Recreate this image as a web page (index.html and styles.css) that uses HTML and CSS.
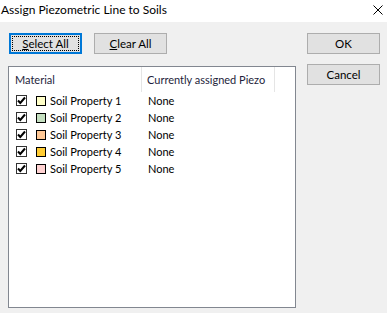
FILE: index.html
```html
<!DOCTYPE html>
<html lang="en">
<head>
	<meta charset="UTF-8">
	<title>Assign Piezometric Line to Soils</title>
	<link rel="stylesheet" href="styles.css">
</head>
<body>
	<div class="dialog">
		<div class="title-bar">
			<span class="title">Assign Piezometric Line to Soils</span>
			<svg class="close" width="10" height="10" viewBox="0 0 10 10">
				<path d="M0.5 0.5 L9.5 9.5 M9.5 0.5 L0.5 9.5" stroke="#000" stroke-width="1"/>
			</svg>
		</div>
		<div class="main">
			<div class="left">
				<div class="top-buttons">
					<button class="btn default"><span class="focus"><u>S</u>elect All</span></button>
					<button class="btn"><u>C</u>lear All</button>
				</div>
				<div class="list">
					<div class="list-head">
						<div class="col col-mat">Material</div>
						<div class="col col-piezo">Currently assigned Piezo</div>
					</div>
					<div class="list-body" id="rows"></div>
				</div>
			</div>
			<div class="right">
				<button class="btn">OK</button>
				<button class="btn">Cancel</button>
			</div>
		</div>
	</div>
	<script>
		var soils = [
			{name: 'Soil Property 1', color: '#ffffc8'},
			{name: 'Soil Property 2', color: '#c4dfc0'},
			{name: 'Soil Property 3', color: '#ffc896'},
			{name: 'Soil Property 4', color: '#ffcc33'},
			{name: 'Soil Property 5', color: '#ffd2d2'}
		];
		var rows = document.getElementById('rows');
		for(var i=0; i<soils.length; i++){
			var row = document.createElement('div');
			row.className = 'row';
			row.innerHTML =
				'<div class="col col-mat">' +
					'<span class="check"><svg width="9" height="9" viewBox="0 0 9 9"><path d="M1 4.5 L3.3 7 L8 1.5" fill="none" stroke="#000" stroke-width="2"/></svg></span>' +
					'<span class="swatch" style="background:' + soils[i].color + '"></span>' +
					'<span>' + soils[i].name + '</span>' +
				'</div>' +
				'<div class="col col-piezo">None</div>';
			rows.appendChild(row);
		}
	</script>
</body>
</html>
```
FILE: styles.css
```css
*{
	margin: 0;
	padding: 0;
	box-sizing: border-box;
}
body{
	width: 387px;
	height: 313px;
	background: #f0f0f0;
	font-family: Lato, "Noto Sans", sans-serif;
	font-size: 11px;
	color: #000;
	overflow: hidden;
}
.title-bar{
	height: 22px;
	background: #fff;
	display: flex;
	align-items: center;
	justify-content: space-between;
	padding: 0 4px 0 1px;
}
.title{
	font-size: 12px;
	line-height: 16px;
	margin-top: -2px;
}
.close{
	margin-top: -2px;
}
.main{
	display: flex;
	padding: 11px 0 0 8px;
}
.left{
	width: 288px;
	flex-shrink: 0;
}
.right{
	margin-left: 11px;
	display: flex;
	flex-direction: column;
	gap: 10px;
}
.top-buttons{
	display: flex;
	gap: 12px;
	padding-left: 1px;
}
.btn{
	width: 73px;
	height: 21px;
	background: #e1e1e1;
	border: 1px solid #adadad;
	font-family: inherit;
	font-size: 11.5px;
	color: #000;
	display: flex;
	align-items: center;
	justify-content: center;
}
.btn.default{
	border: 2px solid #0078d7;
	padding: 1px;
}
.focus{
	display: flex;
	align-items: center;
	justify-content: center;
	width: 100%;
	height: 100%;
	border: 1px dotted #000;
}
.list{
	margin-top: 12px;
	height: 242px;
	background: #fff;
	border: 1px solid #828790;
}
.list-head{
	display: flex;
	height: 25px;
	align-items: center;
	color: #1e1e3c;
}
.list-head .col{
	height: 100%;
	display: flex;
	align-items: center;
	border-right: 1px solid #e5e5e5;
}
.col{
	white-space: nowrap;
}
.col-mat{
	width: 133px;
	padding-left: 6px;
}
.col-piezo{
	width: 133px;
	padding-left: 5px;
}
.row{
	display: flex;
	height: 17px;
	align-items: center;
}
.row .col-mat{
	display: flex;
	align-items: center;
}
.row .col-piezo{
	padding-left: 6px;
}
.check{
	width: 11px;
	height: 11px;
	border: 1px solid #333;
	margin-left: 1px;
	display: flex;
	align-items: center;
	justify-content: center;
}
.swatch{
	width: 10px;
	height: 10px;
	border: 1px solid #000;
	margin-left: 9px;
	margin-right: 4px;
}
```
